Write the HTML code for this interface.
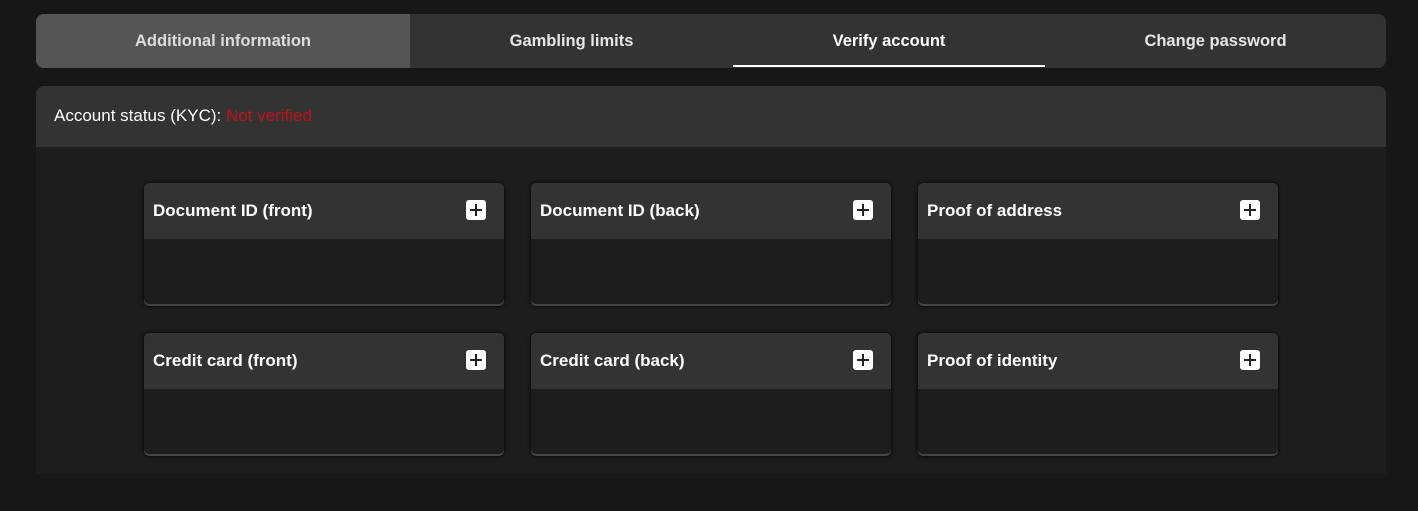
<!DOCTYPE html>
<html><head><style>
body{margin:0;width:1418px;height:511px;background:#181718;font-family:"Liberation Sans",sans-serif;position:relative;overflow:hidden}
.tabs{position:absolute;left:36px;top:14px;width:1350px;height:54px;background:#333;border-radius:8px;overflow:hidden;display:flex}
.tab{height:54px;line-height:54px;text-align:center;color:#e6e6e6;font-size:16.5px;font-weight:bold;position:relative}
.t1{width:374px;background:#555;color:#ddd}
.t2{width:323px}.t3{width:312px;color:#fff}.t4{width:341px}
.t3:after{content:"";position:absolute;left:0;right:0;bottom:1px;height:2px;background:#fff}
.status{position:absolute;left:36px;top:86px;width:1350px;height:61px;background:#333;border-radius:8px 8px 0 0;color:#fff;font-size:17px;line-height:60px;box-sizing:border-box;padding-left:18px}
.status span{color:#c0101e}
.panel{position:absolute;left:36px;top:147px;width:1350px;height:327px;background:#1d1d1d}
.card{position:absolute;width:360px;height:123px;background:#1d1d1d;border-radius:5px;overflow:hidden;box-shadow:0 0 4px #000, inset 0 -2px 0 #444}
.card .h{height:56px;background:#333;color:#fff;font-weight:bold;font-size:17px;line-height:56px;padding-left:9px;position:relative}
.plus{position:absolute;right:18px;top:17px;width:20px;height:20px;background:#fff;border-radius:3px}
.plus:before{content:"";position:absolute;left:4px;top:9px;width:12px;height:2px;background:#222}
.plus:after{content:"";position:absolute;left:9px;top:4px;width:2px;height:12px;background:#222}
</style></head><body>
<div class="tabs"><div class="tab t1">Additional information</div><div class="tab t2">Gambling limits</div><div class="tab t3">Verify account</div><div class="tab t4">Change password</div></div>
<div class="status">Account status (KYC): <span>Not verified</span></div>
<div class="panel"></div>
<div class="card" style="left:144px;top:183px"><div class="h">Document ID (front)<div class="plus"></div></div></div>
<div class="card" style="left:531px;top:183px"><div class="h">Document ID (back)<div class="plus"></div></div></div>
<div class="card" style="left:918px;top:183px"><div class="h">Proof of address<div class="plus"></div></div></div>
<div class="card" style="left:144px;top:333px"><div class="h">Credit card (front)<div class="plus"></div></div></div>
<div class="card" style="left:531px;top:333px"><div class="h">Credit card (back)<div class="plus"></div></div></div>
<div class="card" style="left:918px;top:333px"><div class="h">Proof of identity<div class="plus"></div></div></div>
</body></html>
